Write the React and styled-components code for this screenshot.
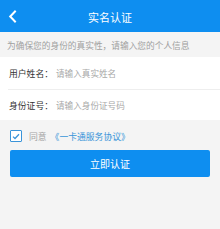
import React from "react";
import styled, { createGlobalStyle } from "styled-components";

const Global = createGlobalStyle`
  html, body { margin: 0; padding: 0; background: #f4f4f4; }
  body { font-family: "Noto Sans CJK SC", "Noto Sans", sans-serif; }
`;

const Page = styled.div`
  width: 220px;
  height: 229px;
  background: #f4f4f4;
  display: flex;
  flex-direction: column;
  overflow: hidden;
`;

const Header = styled.div`
  height: 32px;
  background: #0e8ef0;
  display: flex;
  align-items: center;
  justify-content: center;
  position: relative;
`;

const Back = styled.svg`
  position: absolute;
  left: 8px;
  top: 10px;
`;

const Title = styled.div`
  color: #fff;
  font-size: 11px;
  line-height: 1;
  margin-top: 2px;
`;

const Notice = styled.div`
  height: 25px;
  display: flex;
  align-items: center;
  padding-left: 7px;
  padding-top: 1px;
  box-sizing: border-box;
  font-size: 8.7px;
  color: #a0a0a0;
  white-space: nowrap;
`;

const Form = styled.div`
  background: #fff;
  display: flex;
  flex-direction: column;
`;

const Row = styled.div`
  height: ${p => p.$h}px;
  display: flex;
  align-items: center;
  padding-left: 9px;
  box-sizing: border-box;
  white-space: nowrap;
  border-bottom: ${p => (p.$divider ? "1px solid #ececec" : "none")};
  margin-left: ${p => (p.$divider ? "0" : "0")};
`;

const Label = styled.span`
  font-size: 8.8px;
  color: #333;
  width: 47px;
`;

const Placeholder = styled.span`
  font-size: 8.6px;
  color: #a8a8a8;
`;

const Divider = styled.div`
  height: 1px;
  background: #eeeeee;
  margin-left: 8px;
`;

const Agree = styled.div`
  display: flex;
  align-items: center;
  padding-left: 10px;
  height: 30px;
  box-sizing: border-box;
  padding-top: 2px;
  white-space: nowrap;
`;

const Check = styled.div`
  width: 10px;
  height: 10px;
  border: 1px solid #3a94d9;
  border-radius: 1px;
  background: #fff;
  display: flex;
  align-items: center;
  justify-content: center;
  margin-right: 7px;
`;

const AgreeText = styled.span`
  font-size: 8.8px;
  color: #a6a6a6;
  margin-right: 4px;
`;

const Link = styled.span`
  font-size: 8.8px;
  color: #3a94d9;
`;

const Button = styled.div`
  margin: 0 10px;
  height: 27px;
  background: #0e8ef0;
  border-radius: 2px;
  color: #fff;
  font-size: 10px;
  display: flex;
  align-items: center;
  justify-content: center;
`;

export default function App() {
  return (
    <>
      <Global />
      <Page>
        <Header>
          <Back width="9" height="13" viewBox="0 0 9 13">
            <path d="M7 1.5 L2.2 6.5 L7 11.5" fill="none" stroke="#fff" strokeWidth="2" strokeLinecap="square" />
          </Back>
          <Title>实名认证</Title>
        </Header>
        <Notice>为确保您的身份的真实性，请输入您的个人信息</Notice>
        <Form>
          <Row $h={32}>
            <Label>用户姓名：</Label>
            <Placeholder>请输入真实姓名</Placeholder>
          </Row>
          <Divider />
          <Row $h={30}>
            <Label>身份证号：</Label>
            <Placeholder>请输入身份证号码</Placeholder>
          </Row>
        </Form>
        <Agree>
          <Check>
            <svg width="8" height="7" viewBox="0 0 8 7">
              <path d="M1 3.6 L3 5.5 L7 1.2" fill="none" stroke="#3a94d9" strokeWidth="1.3" />
            </svg>
          </Check>
          <AgreeText>同意</AgreeText>
          <Link>《一卡通服务协议》</Link>
        </Agree>
        <Button>立即认证</Button>
      </Page>
    </>
  );
}
